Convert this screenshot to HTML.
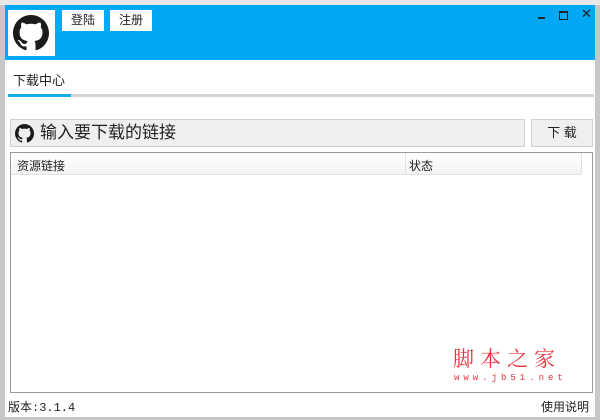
<!DOCTYPE html><html><head><meta charset="utf-8"><style>
body{margin:0;width:600px;height:420px;background:#c8c8c8;position:relative;overflow:hidden;font-family:"Liberation Sans","Noto Sans CJK SC",sans-serif;font-size:12px;color:#222}
.a{position:absolute}
</style></head><body>
<div class="a" style="left:0;top:0;width:600px;height:5px;background:#e8e8e8"></div>
<div class="a" style="left:5px;top:5px;width:590px;height:412px;background:#fff"></div>
<div class="a" style="left:5px;top:5px;width:590px;height:55px;background:#02a8f3"></div>
<div class="a" style="left:8px;top:10px;width:47px;height:46px;background:#fff"></div>
<svg class="a" style="left:13px;top:15px" width="36" height="36" viewBox="0 0 16 16"><path fill="#1b1b1b" d="M8 0C3.58 0 0 3.58 0 8c0 3.54 2.29 6.53 5.47 7.59.4.07.55-.17.55-.38v-1.33c-2.23.48-2.7-1.07-2.7-1.07-.36-.92-.89-1.17-.89-1.17-.73-.5.06-.49.06-.49.8.06 1.23.83 1.23.83.71 1.22 1.87.87 2.33.66.07-.52.28-.87.5-1.07-1.78-.2-3.64-.89-3.64-3.95 0-.87.31-1.59.82-2.150-.08-.2-.36-1.02.08-2.12 0 0 .67-.21 2.2.82a7.6 7.6 0 0 1 4 0c1.53-1.04 2.2-.82 2.2-.82.44 1.1.16 1.92.08 2.12.51.56.82 1.27.82 2.15 0 3.07-1.87 3.75-3.65 3.95.29.25.54.73.54 1.48v2.2c0 .21.15.46.55.38A8.01 8.01 0 0 0 16 8c0-4.42-3.58-8-8-8z"/></svg>
<div class="a" style="left:62px;top:10px;width:42px;height:21px;background:#fff;text-align:center;line-height:21px">登陆</div>
<div class="a" style="left:110px;top:10px;width:42px;height:21px;background:#fff;text-align:center;line-height:21px">注册</div>
<div class="a" style="left:538px;top:17px;width:7px;height:2px;background:#222"></div>
<div class="a" style="left:559px;top:11px;width:7px;height:6px;border:1.5px solid #222;border-top-width:2px"></div>
<div class="a" style="left:581px;top:6px;font-size:13px">✕</div>
<div class="a" style="left:13px;top:70px;font-size:13px">下载中心</div>
<div class="a" style="left:8px;top:94px;width:586px;height:3px;background:#d4d4d4"></div>
<div class="a" style="left:8px;top:94px;width:63px;height:3px;background:#14aee8"></div>
<div class="a" style="left:10px;top:119px;width:513px;height:26px;background:#efefef;border:1px solid #d0d0d0"></div>
<svg class="a" style="left:15px;top:124px" width="19" height="19" viewBox="0 0 16 16"><path fill="#1b1b1b" d="M8 0C3.58 0 0 3.58 0 8c0 3.54 2.29 6.53 5.47 7.59.4.07.55-.17.55-.38v-1.33c-2.23.48-2.7-1.07-2.7-1.07-.36-.92-.89-1.17-.89-1.17-.73-.5.06-.49.06-.49.8.06 1.23.83 1.23.83.71 1.22 1.87.87 2.33.66.07-.52.28-.87.5-1.07-1.78-.2-3.64-.89-3.64-3.95 0-.87.31-1.59.82-2.15-.08-.2-.36-1.02.08-2.12 0 0 .67-.21 2.2.82a7.6 7.6 0 0 1 4 0c1.53-1.04 2.2-.82 2.2-.82.44 1.1.16 1.92.08 2.12.51.56.82 1.27.82 2.15 0 3.07-1.87 3.75-3.65 3.95.29.25.54.73.54 1.48v2.2c0 .21.15.46.55.38A8.01 8.01 0 0 0 16 8c0-4.42-3.58-8-8-8z"/></svg>
<div class="a" style="left:40px;top:120px;font-size:17px;line-height:26px;color:#222">输入要下载的链接</div>
<div class="a" style="left:531px;top:119px;width:60px;height:26px;background:#efefef;border:1px solid #d0d0d0;text-align:center;line-height:26px;font-size:13px">下 载</div>
<div class="a" style="left:10px;top:152px;width:581px;height:239px;border:1px solid #999;background:#fff"></div>
<div class="a" style="left:11px;top:153px;width:570px;height:21px;background:linear-gradient(#fff,#f3f3f3);border-bottom:1px solid #e2e2e2"></div>
<div class="a" style="left:405px;top:153px;width:1px;height:21px;background:#e0e0e0"></div>
<div class="a" style="left:581px;top:153px;width:1px;height:21px;background:#e0e0e0"></div>
<div class="a" style="left:17px;top:157px">资源链接</div>
<div class="a" style="left:409px;top:157px">状态</div>
<div class="a" style="left:453px;top:343px;font-size:21px;color:#e8323c;letter-spacing:6px;font-family:'Noto Serif CJK SC',serif">脚本之家</div>
<div class="a" style="left:454px;top:373px;font-size:9px;color:#e8323c;letter-spacing:4px;font-family:'Liberation Mono',monospace">www.jb51.net</div>
<div class="a" style="left:8px;top:398px;font-family:'Liberation Mono','Noto Sans CJK SC',monospace;font-size:12px">版本:3.1.4</div>
<div class="a" style="left:541px;top:398px">使用说明</div>
</body></html>
